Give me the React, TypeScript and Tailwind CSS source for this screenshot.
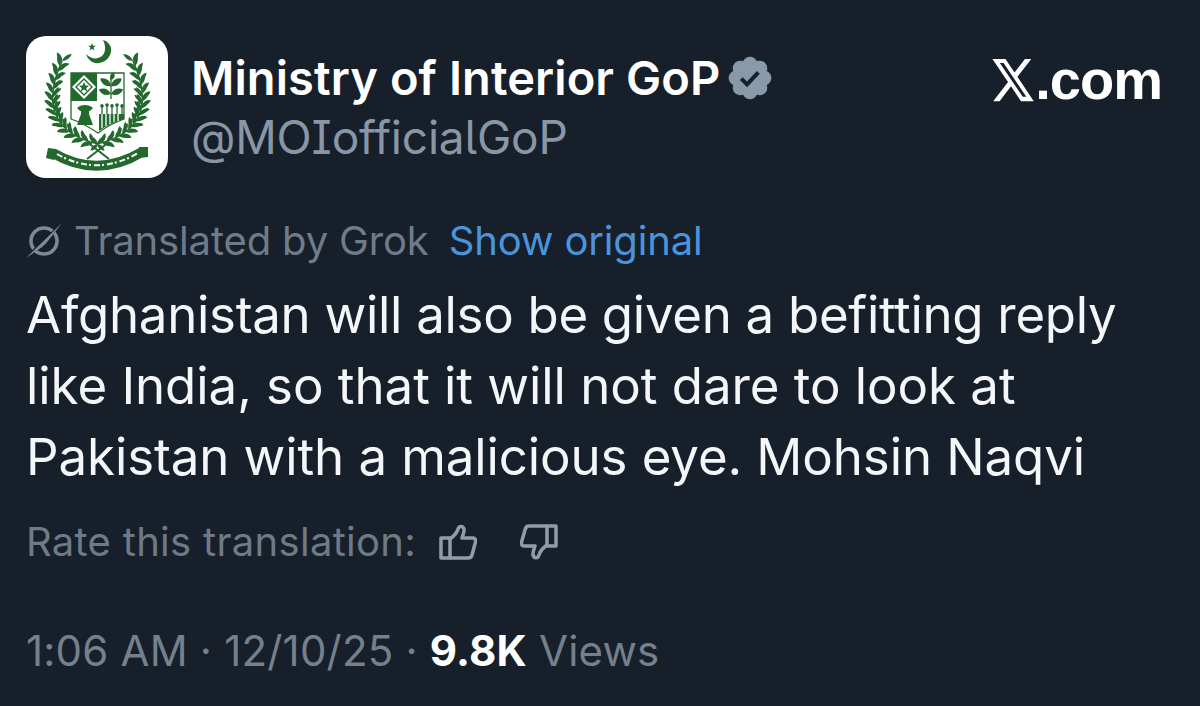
const G = "#23692e";

function Leaf({ x, y, r, l = 10, w = 2.6, fill = G }: { x: number; y: number; r: number; l?: number; w?: number; fill?: string }) {
  return <path d={`M0 0C${l * 0.3} ${-w} ${l * 0.7} ${-w} ${l} 0C${l * 0.7} ${w} ${l * 0.3} ${w} 0 0Z`} fill={fill} transform={`translate(${x} ${y}) rotate(${r})`} />;
}

const wreath: { x: number; y: number; a: number }[] = Array.from({ length: 27 }, (_, i) => {
  const t = i / 26;
  const u = 1 - t;
  const x = u * u * 36 + 2 * u * t * 6 + t * t * 72;
  const y = u * u * 25 + 2 * u * t * 92 + t * t * 108;
  const dx = 2 * u * (6 - 36) + 2 * t * (72 - 6);
  const dy = 2 * u * (92 - 25) + 2 * t * (108 - 92);
  return { x, y, a: (Math.atan2(dy, dx) * 180) / Math.PI };
});

function Branch() {
  return (
    <g>
      <path d="M36 25Q6 92 72 108" fill="none" stroke={G} strokeWidth="1.500" />
      {wreath.map((p, i) => (
        <g key={i}>
          <Leaf x={p.x} y={p.y} r={p.a + 180 + (i % 2 ? 55 : 30)} l={i % 2 ? 10 : 12} w={2.4} />
          <Leaf x={p.x} y={p.y} r={p.a + 180 - (i % 2 ? 30 : 55)} l={i % 2 ? 12 : 10} w={2.4} />
          <circle cx={p.x + 6 * Math.cos(((p.a + 90) * Math.PI) / 180)} cy={p.y + 6 * Math.sin(((p.a + 90) * Math.PI) / 180)} r="1.200" fill="#fff" />
        </g>
      ))}
    </g>
  );
}

function Emblem() {
  return (
    <svg width="142" height="142" viewBox="0 0 142 142" className="shrink-0">
      {/* crescent and star */}
      <path d="M77 4C80 10 80 16 76 20C71 24 65 23 60 18C62 24 67 28 73 27C81 26 86 19 85 12C84 8 81 5 77 4Z" fill={G} />
      <path d="M66 7l1 2.700 2.900.1-2.300 1.800.8 2.800-2.400-1.600-2.400 1.600.8-2.800-2.300-1.800 2.900-.1Z" fill={G} />
      <Branch />
      <g transform="matrix(-1 0 0 1 143 0)"><Branch /></g>
      {/* shield */}
      <path d="M45 37H98V83C90 86 80 91 72 97C63 91 54 86 45 83Z" fill="#fff" stroke={G} strokeWidth="1.300" />
      <path d="M45 37H71V65H45Z" fill={G} />
      <path d="M58 39L70 51L58 63L46 51Z" fill="#fff" />
      <path d="M58 43L66 51L58 59L50 51Z" fill="none" stroke={G} strokeWidth="1.400" />
      <path d="M58 46l1.500 3.400 3.500.3-2.700 2.300.9 3.500-3.200-1.900-3.200 1.900.9-3.500-2.700-2.300 3.500-.3Z" fill={G} />
      {/* tea branch */}
      <path d="M85 63V42" stroke={G} strokeWidth="1.300" />
      <Leaf x={85} y={50} r={-35} l={13} w={4} /><Leaf x={85} y={50} r={-145} l={13} w={4} />
      <Leaf x={85} y={58} r={-20} l={13} w={4} /><Leaf x={85} y={58} r={-160} l={13} w={4} />
      <Leaf x={85} y={44} r={-70} l={8} w={3} />
      {/* wheat sheaf */}
      <g fill={G}>
        <path d="M51 72C55 68 63 68 67 72L64 75H54Z" />
        <path d="M55 75H63V78L67 89H51L55 78Z" />
      </g>
      {/* jute and cotton */}
      <g stroke={G} strokeWidth="1.300" fill="none">
        <path d="M76 83V68M81 83V68M86 83V68M91 83V68M96 82V68" />
      </g>
      <g fill={G}>
        <circle cx="76" cy="70" r="1.800" /><circle cx="81" cy="69" r="1.800" /><circle cx="86" cy="70" r="1.800" /><circle cx="91" cy="69" r="1.800" /><circle cx="96" cy="70" r="1.800" />
        <path d="M73 78H98V83C90 85.500 80 90 73 95Z" />
      </g>
      <path d="M76 78V92M80 78V90M84 78V88M88 78V86M92 78V85" stroke="#fff" strokeWidth="1.300" />
      {/* crossed stems and ribbon */}
      <path d="M61 106L83 123M83 106L61 123" stroke={G} strokeWidth="2" />
      <path d="M27 117Q71 143 116 116" fill="none" stroke={G} strokeWidth="10" />
      <path d="M31 118Q71 141 112 117" fill="none" stroke="#fff" strokeWidth="2" strokeDasharray="6 2 2 3" />
      <path d="M22 112L30 113L28 124L20 122Z" fill={G} />
      <path d="M113 111L122 111L122 121L113 122Z" fill={G} />
    </svg>
  );
}

function Badge() {
  return (
    <svg width="50" height="50" viewBox="0 0 24 24" className="shrink-0">
      <path fill="#8899a9" d="M22.250 12c0-1.430-.880-2.670-2.190-3.340.460-1.390.2-2.900-.810-3.910s-2.520-1.270-3.910-.810c-.660-1.310-1.910-2.190-3.340-2.190s-2.670.880-3.330 2.190c-1.400-.460-2.910-.2-3.920.81s-1.260 2.520-.8 3.910c-1.310.670-2.200 1.910-2.200 3.340s.890 2.670 2.200 3.340c-.460 1.390-.210 2.900.8 3.910s2.520 1.260 3.910.81c.670 1.310 1.910 2.190 3.340 2.190s2.680-.880 3.340-2.190c1.390.450 2.900.2 3.910-.810s1.270-2.520.81-3.910c1.310-.670 2.190-1.910 2.190-3.340z" />
      <path d="M7.800 12.300L10.600 15.100L16 9.300" fill="none" stroke="#17202c" strokeWidth="1.900" />
    </svg>
  );
}

function XLogo() {
  return (
    <svg width="46" height="52" viewBox="0 0 24 24" preserveAspectRatio="none" className="shrink-0">
      <path fill="#fff" d="M18.244 2.250h3.308l-7.227 8.260 8.502 11.240H16.170l-5.214-6.817L4.990 21.750H1.680l7.730-8.835L1.254 2.250H8.080l4.713 6.231zm-1.161 17.520h1.833L7.084 4.126H5.117z" />
    </svg>
  );
}

function GrokIcon() {
  return (
    <svg width="40" height="40" viewBox="0 0 40 40" className="shrink-0">
      <circle cx="20" cy="20" r="13" fill="none" stroke="#7f8995" strokeWidth="3.500" />
      <path d="M0 37L37 2L24 21L17 26Z" fill="#171f2b" />
      <path d="M2 37L38 2L22 22.500L17.500 26.500Z" fill="#7f8995" />
    </svg>
  );
}

function ThumbUp() {
  return (
    <svg width="38" height="38" viewBox="0 0 38 38" fill="none" stroke="#929ca8" strokeWidth="3.500" strokeLinejoin="round">
      <path d="M2 15H11V35H2Z" />
      <path d="M11 16C15 13 18 10 19 6C20 2.500 24 2.500 25 6C25.500 9 24 12 23 15H34C36 15 37 17 36.500 19L33 32C32.500 34 31 35 29 35H11" />
    </svg>
  );
}

function ThumbDown() {
  return (
    <svg width="38" height="38" viewBox="0 0 38 38" fill="none" stroke="#929ca8" strokeWidth="3.500" strokeLinejoin="round">
      <path d="M36 3H27V23H36Z" />
      <path d="M27 22C23 25 20 28 19 32C18 35.500 14 35.500 13 32C12.500 29 14 26 15 23H4C2 23 1 21 1.500 19L5 7C5.500 4.500 7 3 9 3H27" />
    </svg>
  );
}

export default function App() {
  return (
    <div className="h-[706px] w-[1200px] overflow-hidden bg-[#171f2b] pl-[26px] pr-[38px] pt-[36px] font-['Inter',sans-serif] text-white">
      <header className="flex items-start">
        <div className="h-[142px] w-[142px] shrink-0 overflow-hidden rounded-[20px] bg-white"><Emblem /></div>
        <div className="ml-[23px] flex-1 pt-[16px]">
          <div className="flex h-[52px] items-center gap-[4px]">
            <span className="text-[47px] font-semibold leading-[52px] tracking-[0.1px]">Ministry of Interior GoP</span>
            <Badge />
          </div>
          <div className="mt-[8px] text-[46px] leading-[50px] tracking-[-0.2px] text-[#8896a5] [font-feature-settings:'ss02']">@MOIofficialGoP</div>
        </div>
        <div className="mt-[18px] flex items-center">
          <XLogo />
          <span className="ml-[-1px] font-['Liberation_Sans',sans-serif] text-[56px] font-bold leading-[50px] tracking-[-1px]">.com</span>
        </div>
      </header>
      <div className="mt-[38px] flex h-[50px] items-center">
        <span className="ml-[-2px]"><GrokIcon /></span>
        <span className="ml-[10px] text-[40px] tracking-[-0.15px] text-[#707b88]">Translated by Grok</span>
        <span className="ml-[20px] text-[40px] tracking-[-0.15px] text-[#4a94dc]">Show original</span>
      </div>
      <div className="mt-[13px] text-[51px] leading-[71px] text-[#f4f6f8]">
        <p className="tracking-[-0.3px]">Afghanistan will also be given a befitting reply</p>
        <p className="tracking-[-0.05px]">like India, so that it will not dare to look at</p>
        <p className="tracking-[-0.1px]">Pakistan with a malicious eye. Mohsin Naqvi</p>
      </div>
      <div className="mt-[25px] flex h-[50px] items-center">
        <span className="text-[40px] tracking-[0.3px] text-[#6f7a87]">Rate this translation:</span>
        <span className="ml-[23px]"><ThumbUp /></span>
        <span className="ml-[43px]"><ThumbDown /></span>
      </div>
      <div className="mt-[58px] flex h-[50px] items-center text-[42px] tracking-[0.2px] text-[#75808d]">
        <span>1:06 AM · 12/10/25 ·&nbsp;</span>
        <span className="font-bold text-white">9.8K</span>
        <span>&nbsp;Views</span>
      </div>
    </div>
  );
}
